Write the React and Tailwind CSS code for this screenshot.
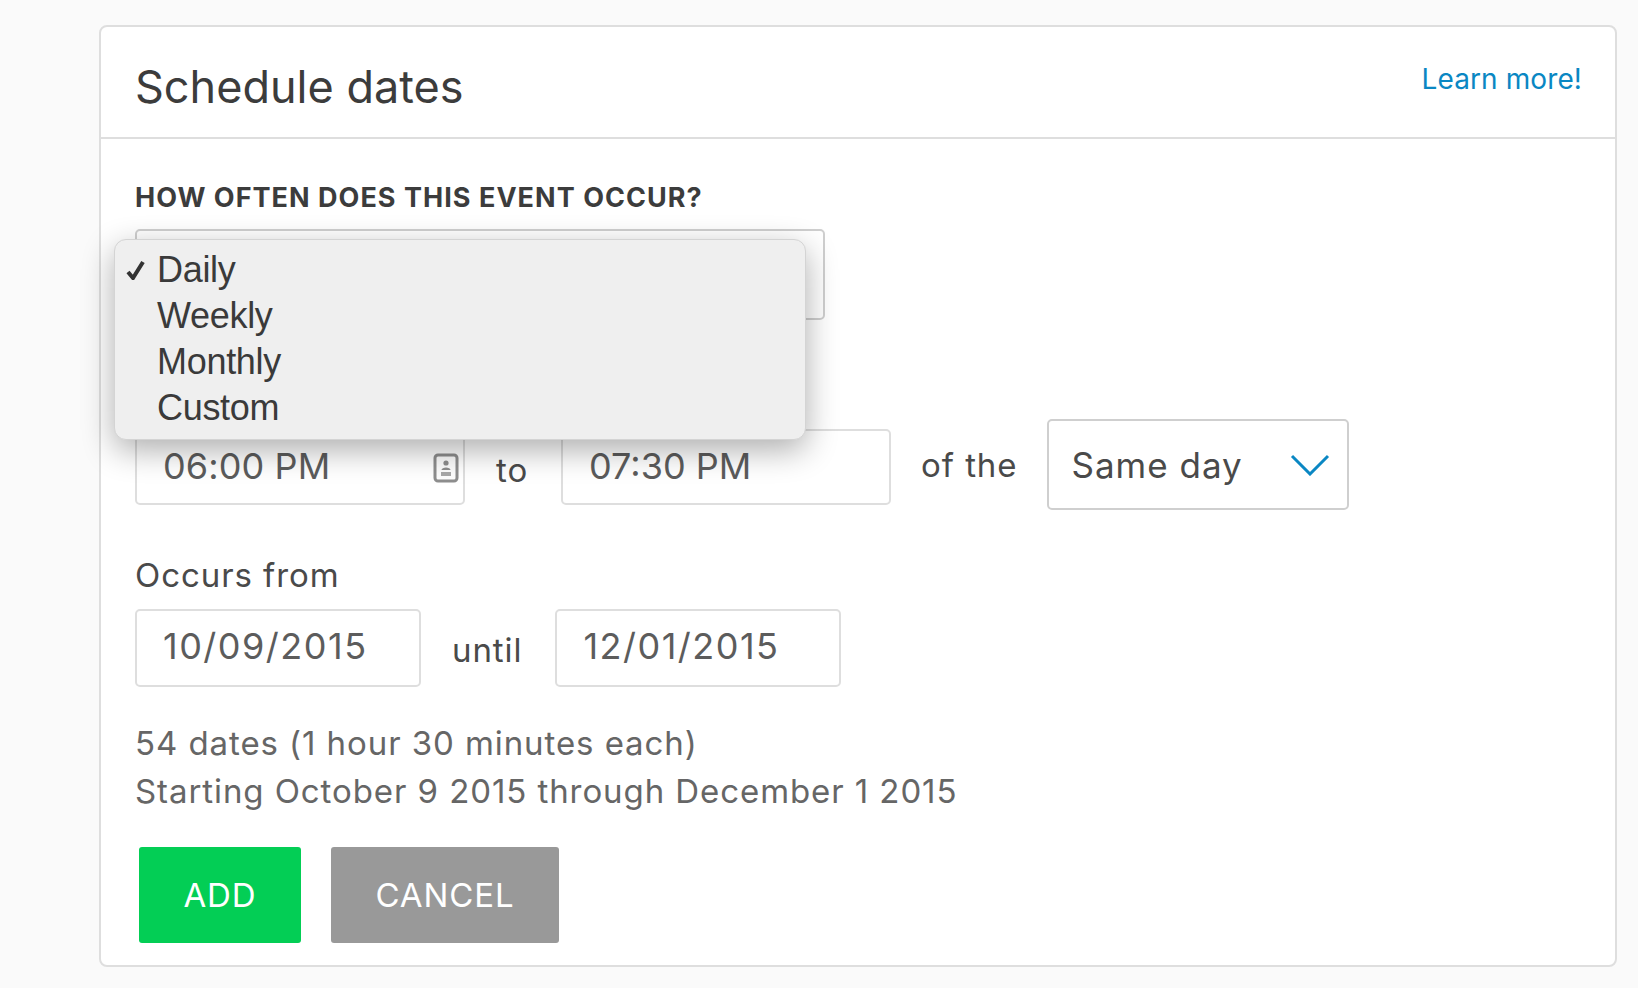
import React from 'react';

const FONT = "font-['Inter','Noto_Sans',sans-serif]";

const Chevron = ({ className }) => (
  <svg className={className} width="40" height="22" viewBox="0 0 40 22" fill="none">
    <path d="M2 2 L20 20 L38 2" stroke="#0a87c3" strokeWidth="3" />
  </svg>
);

const TextBox = ({ value, width, height, children, className = '' }) => (
  <div
    className={`relative flex items-center shrink-0 rounded-[5px] border-2 border-[#dedede] bg-white text-[36px] text-[#5c5c5c] ${width} ${height} ${className}`}
  >
    {value}
    {children}
  </div>
);

const SelectBox = ({ value, width, className = '' }) => (
  <div
    className={`flex items-center justify-between shrink-0 h-[91px] rounded-[5px] border-2 border-[#cfcfcf] bg-white pl-[22px] pr-[17px] text-[35px] tracking-[1px] text-[#4a4a4a] ${width} ${className}`}
  >
    <span>{value}</span>
    <Chevron />
  </div>
);

const TimeIcon = () => (
  <svg className="absolute left-[296px] top-[22px]" width="26" height="30" viewBox="0 0 26 30" fill="none">
    <rect x="2" y="2" width="22" height="26" rx="3" stroke="#8e8e8e" strokeWidth="3" fill="#fdfdfd" />
    <circle cx="13" cy="10" r="2.6" fill="#8e8e8e" />
    <path d="M8.5 17 C8.5 13.5 17.5 13.5 17.5 17 Z" fill="#8e8e8e" />
    <rect x="8" y="19" width="10" height="4" fill="#a8a8a8" />
  </svg>
);

const menuItems = ['Daily', 'Weekly', 'Monthly', 'Custom'];

const NativeMenu = () => (
  <div className="absolute left-[13px] top-[100px] w-[692px] h-[201px] rounded-[12px] border border-[#d4d4d4] bg-[#efefef] pt-[7px] pl-[42px] shadow-[0_10px_32px_rgba(0,0,0,0.32)] font-['Liberation_Sans',sans-serif] text-[36px] leading-[46px] tracking-[-0.3px] text-[#3a3a3a]">
    <svg className="absolute left-[11px] top-[20px]" width="20" height="20" viewBox="0 0 20 20" fill="none">
      <path d="M2 12 L7 18 L17 2" stroke="#333" strokeWidth="4" />
    </svg>
    {menuItems.map((item) => (
      <div key={item}>{item}</div>
    ))}
  </div>
);

export default function App() {
  return (
    <div className={`h-[988px] w-[1638px] overflow-hidden bg-[#fafafa] pl-[99px] pt-[25px] ${FONT}`}>
      <div className="h-[942px] w-[1518px] rounded-[8px] border-2 border-[#dedede] bg-white">
        <div className="flex h-[112px] justify-between border-b-2 border-[#dedede] pl-[34px] pr-[33px]">
          <h1 className="mt-[33px] text-[45px] leading-[54px] tracking-[0px] text-[#3c3c3c]">Schedule dates</h1>
          <a className="mt-[34px] text-[28px] leading-[36px] tracking-[0.1px] text-[#0a87c3]">Learn more!</a>
        </div>

        <div className="relative px-[34px] pt-[43px] text-[33px] leading-[44px] tracking-[0.92px]">
          <div className="text-[27px] font-bold leading-[32px] tracking-[1.03px] text-[#3c3c3c]">
            HOW OFTEN DOES THIS EVENT OCCUR?
          </div>
          <SelectBox width="w-[690px]" className="mt-[15px]" />

          <div className="mt-[99px] flex items-start">
            <TextBox value="06:00 PM" width="w-[330px]" height="h-[76px]" className="mt-[10px] pb-[2px] pl-[26px] tracking-[0.1px]">
              <TimeIcon />
            </TextBox>
            <span className="ml-[31px] mt-[29px] text-[#4a4a4a]">to</span>
            <TextBox value="07:30 PM" width="w-[330px]" height="h-[76px]" className="ml-[33px] mt-[10px] pb-[2px] pl-[26px] tracking-[0px]" />
            <span className="ml-[30px] mt-[24px] text-[#4a4a4a]">of the</span>
            <SelectBox value="Same day" width="w-[302px]" className="ml-[30px]" />
          </div>

          <div className="mt-[43px] text-[#4a4a4a]">Occurs from</div>
          <div className="mt-[12px] flex items-start">
            <TextBox value="10/09/2015" width="w-[286px]" height="h-[78px]" className="pb-[4px] pl-[26px] tracking-[1.5px]" />
            <span className="ml-[31px] mt-[19px] text-[#4a4a4a]">until</span>
            <TextBox value="12/01/2015" width="w-[286px]" height="h-[78px]" className="ml-[33px] pb-[4px] pl-[26px] tracking-[1.5px]" />
          </div>

          <div className="mt-[32px] leading-[48px] text-[#666666]">
            <div>54 dates (1 hour 30 minutes each)</div>
            <div>Starting October 9 2015 through December 1 2015</div>
          </div>

          <div className="ml-[4px] mt-[32px] flex gap-[30px] text-white">
            <button className="h-[96px] w-[162px] rounded-[3px] bg-[#03ce55]">ADD</button>
            <button className="h-[96px] w-[228px] rounded-[3px] bg-[#999999]">CANCEL</button>
          </div>

          <NativeMenu />
        </div>
      </div>
    </div>
  );
}
